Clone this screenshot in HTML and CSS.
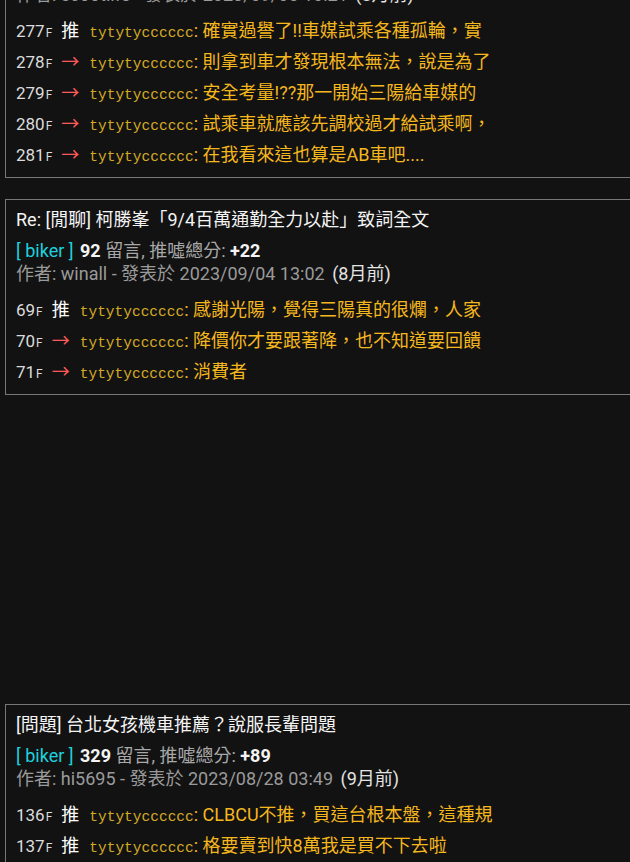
FILE: index.html
```html
<!DOCTYPE html>
<html lang="zh-Hant">
<head>
  <meta charset="UTF-8">
  <meta name="viewport" content="width=device-width, initial-scale=1.0">
  <title>推文紀錄</title>
  <link rel="stylesheet" href="styles.css">
</head>
<body>
  <div class="feed">
    <article class="post post-first">
      <h3 class="post-title">[心得] 三陽新車試乘心得分享</h3>
      <div class="post-board"><span class="board">[ biker ]</span> <b>214</b> 留言, 推噓總分: <b>+31</b></div>
      <div class="post-meta">作者: scootlife - 發表於 2023/09/05 10:21 <span class="ago">(8月前)</span></div>
      <ul class="pushes">
        <li><span class="floor">277<small>F</small></span><span class="tag push">推</span><span class="user">tytytycccccc</span><span class="text">: 確實過譽了!!車媒試乘各種孤輪，實</span></li>
        <li><span class="floor">278<small>F</small></span><span class="tag arrow">→</span><span class="user">tytytycccccc</span><span class="text">: 則拿到車才發現根本無法，說是為了</span></li>
        <li><span class="floor">279<small>F</small></span><span class="tag arrow">→</span><span class="user">tytytycccccc</span><span class="text">: 安全考量!??那一開始三陽給車媒的</span></li>
        <li><span class="floor">280<small>F</small></span><span class="tag arrow">→</span><span class="user">tytytycccccc</span><span class="text">: 試乘車就應該先調校過才給試乘啊，</span></li>
        <li><span class="floor">281<small>F</small></span><span class="tag arrow">→</span><span class="user">tytytycccccc</span><span class="text">: 在我看來這也算是AB車吧....</span></li>
      </ul>
    </article>

    <article class="post">
      <h3 class="post-title">Re: [閒聊] 柯勝峯「9/4百萬通勤全力以赴」致詞全文</h3>
      <div class="post-board"><span class="board">[ biker ]</span> <b>92</b> 留言, 推噓總分: <b>+22</b></div>
      <div class="post-meta">作者: winall - 發表於 2023/09/04 13:02 <span class="ago">(8月前)</span></div>
      <ul class="pushes">
        <li><span class="floor">69<small>F</small></span><span class="tag push">推</span><span class="user">tytytycccccc</span><span class="text">: 感謝光陽，覺得三陽真的很爛，人家</span></li>
        <li><span class="floor">70<small>F</small></span><span class="tag arrow">→</span><span class="user">tytytycccccc</span><span class="text">: 降價你才要跟著降，也不知道要回饋</span></li>
        <li><span class="floor">71<small>F</small></span><span class="tag arrow">→</span><span class="user">tytytycccccc</span><span class="text">: 消費者</span></li>
      </ul>
    </article>

    <div class="feed-gap"></div>

    <article class="post">
      <h3 class="post-title">[問題] 台北女孩機車推薦？說服長輩問題</h3>
      <div class="post-board"><span class="board">[ biker ]</span> <b>329</b> 留言, 推噓總分: <b>+89</b></div>
      <div class="post-meta">作者: hi5695 - 發表於 2023/08/28 03:49 <span class="ago">(9月前)</span></div>
      <ul class="pushes">
        <li><span class="floor">136<small>F</small></span><span class="tag push">推</span><span class="user">tytytycccccc</span><span class="text">: CLBCU不推，買這台根本盤，這種規</span></li>
        <li><span class="floor">137<small>F</small></span><span class="tag push">推</span><span class="user">tytytycccccc</span><span class="text">: 格要賣到快8萬我是買不下去啦</span></li>
      </ul>
    </article>
  </div>
</body>
</html>
```

FILE: styles.css
```css
body {
  margin: 0;
  background-color: #121212;
  color: #e6e6e6;
  font-family: Roboto, "Noto Sans CJK TC", sans-serif;
  overflow: hidden;
  height: 100vh;
}
.feed {
  display: flex;
  flex-direction: column;
  gap: 21px;
  padding-left: 5px;
}
.post {
  width: 660px;
  border: 1px solid #777;
  padding: 8px 10px 7px 10px;
  box-sizing: border-box;
}
.post-first {
  margin-top: -80px;
}
.feed-gap {
  height: 267px;
}
.post-title {
  margin: 0;
  font-size: 18px;
  font-weight: normal;
  line-height: 24px;
  color: #f4f4f4;
  white-space: nowrap;
}
.post-board {
  margin-top: 7px;
  font-size: 18px;
  line-height: 24px;
  color: #a8a8a8;
}
.post-board b {
  color: #f4f4f4;
  font-weight: bold;
}
.post-board .board {
  color: #1fd0de;
  margin-right: 2px;
}
.post-meta {
  font-size: 18px;
  line-height: 22px;
  color: #9a9a9a;
}
.post-meta .ago {
  color: #e4e4e4;
  margin-left: 3px;
}
.pushes {
  list-style: none;
  margin: 9px 0 0 0;
  padding: 0;
}
.pushes li {
  height: 31px;
  line-height: 31px;
  white-space: nowrap;
  display: flex;
  align-items: baseline;
}
.floor {
  font-size: 17px;
  color: #dcdcdc;
}
.floor small {
  font-size: 12px;
  margin-left: 1px;
}
.tag {
  font-size: 18px;
  margin-left: 9px;
  margin-right: 10px;
}
.tag.push {
  color: #ffffff;
}
.tag.arrow {
  color: #ff5a5a;
}
.user {
  font-family: "Liberation Mono", monospace;
  font-size: 14.5px;
  color: #d4aa24;
}
.text {
  font-size: 18px;
  color: #f5b71e;
}
```
